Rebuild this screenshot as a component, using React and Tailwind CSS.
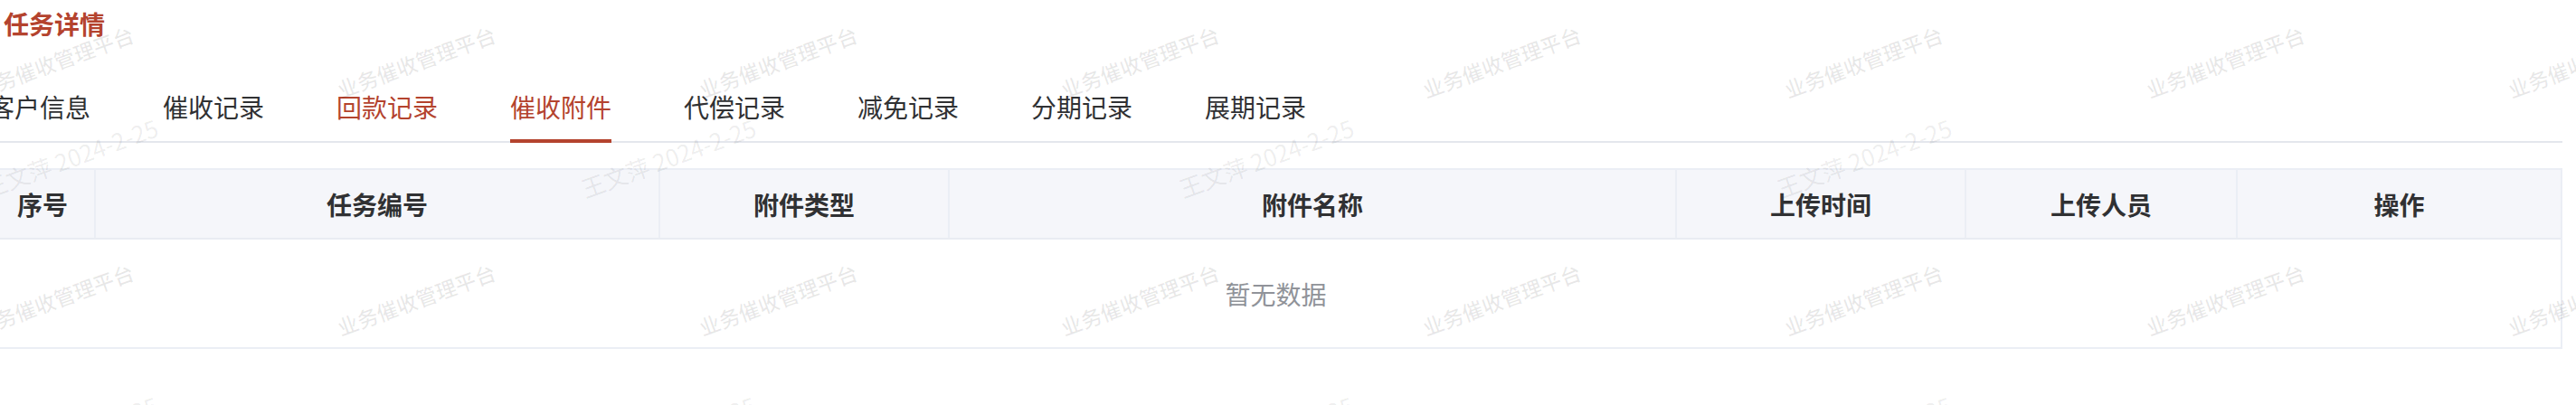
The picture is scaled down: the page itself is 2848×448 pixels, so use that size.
import React, { useState } from 'react';

const tabs = ['客户信息', '催收记录', '回款记录', '催收附件', '代偿记录', '减免记录', '分期记录', '展期记录'];

const columns = [
  { title: '序号', width: 'w-[116px]' },
  { title: '任务编号', width: 'w-[624px]' },
  { title: '附件类型', width: 'w-[320px]' },
  { title: '附件名称', width: 'w-[804px]' },
  { title: '上传时间', width: 'w-[320px]' },
  { title: '上传人员', width: 'w-[300px]' },
  { title: '操作', width: 'flex-1' },
];

// watermark anchors (text end points), rotated -20deg
const platformMarks = [];
for (let j = 0; j < 2; j++) {
  for (let k = -1; k < 8; k++) {
    platformMarks.push({ x: 150 + 400 * k, y: 46 + 263 * j });
  }
}
const userMarks = [];
for (let j = 0; j < 2; j++) {
  for (let k = 0; k < 4; k++) {
    userMarks.push({ x: 177 + 661 * k, y: 150 + 307 * j });
  }
}

const Watermark = () => (
  <svg className="absolute inset-0 pointer-events-none" width="2848" height="448">
    {platformMarks.map((m, i) => (
      <text
        key={'p' + i}
        x={m.x}
        y={m.y}
        textAnchor="end"
        transform={`rotate(-20 ${m.x} ${m.y})`}
        fontSize="23"
        fontWeight="500"
        fill="rgba(0,0,0,0.09)"
        fontFamily="'Noto Sans CJK SC', sans-serif"
      >
        业务催收管理平台
      </text>
    ))}
    {userMarks.map((m, i) => (
      <text
        key={'u' + i}
        x={m.x}
        y={m.y}
        textAnchor="end"
        transform={`rotate(-20 ${m.x} ${m.y})`}
        fontSize="26"
        fill="rgba(0,0,0,0.08)"
        fontFamily="'Noto Sans CJK SC', sans-serif"
      >
        王文萍 2024-2-25
      </text>
    ))}
  </svg>
);

const App = () => {
  const [activeTab, setActiveTab] = useState('催收附件');
  const hoverTab = '回款记录';

  return (
    <div className="relative w-[2848px] h-[448px] overflow-hidden bg-white font-['Noto_Sans_CJK_SC',sans-serif]">
      <div className="-ml-[12px] w-[2845px]">
        {/* title */}
        <div className="ml-[16px] h-[52px] leading-[52px] text-[28px] font-bold text-[#b4432e]">任务详情</div>

        {/* tabs */}
        <div className="mt-[24px] flex h-[82px] border-b-2 border-[#e4e7ed]">
          {tabs.map((t, i) => {
            const active = t === activeTab;
            const red = active || t === hoverTab;
            return (
              <div
                key={t}
                onClick={() => setActiveTab(t)}
                className={`h-[80px] leading-[84px] text-[28px] cursor-pointer ${
                  i === 0 ? 'pr-[40px]' : i === tabs.length - 1 ? 'pl-[40px]' : 'px-[40px]'
                } ${red ? 'text-[#b4432e]' : 'text-[#303133]'}`}
              >
                <span className="relative inline-block h-[80px]">
                  {t}
                  {active && <span className="absolute left-0 right-0 -bottom-[2px] h-[4px] bg-[#b4432e]" />}
                </span>
              </div>
            );
          })}
        </div>

        {/* table */}
        <div className="mt-[28px] border-2 border-[#ebeef5]">
          <div className="flex h-[77px] bg-[#f5f6fa] border-b-2 border-[#e9ecf2]">
            {columns.map((c, i) => (
              <div
                key={c.title}
                className={`${c.width} flex items-center justify-center text-[28px] font-bold text-[#303133] ${
                  i < columns.length - 1 ? 'border-r-2 border-[#ebeef5]' : ''
                }`}
              >
                {c.title}
              </div>
            ))}
          </div>
          <div className="h-[119px] flex items-center justify-center text-[28px] text-[#909399]">暂无数据</div>
        </div>
      </div>
      <Watermark />
    </div>
  );
};

export default App;
